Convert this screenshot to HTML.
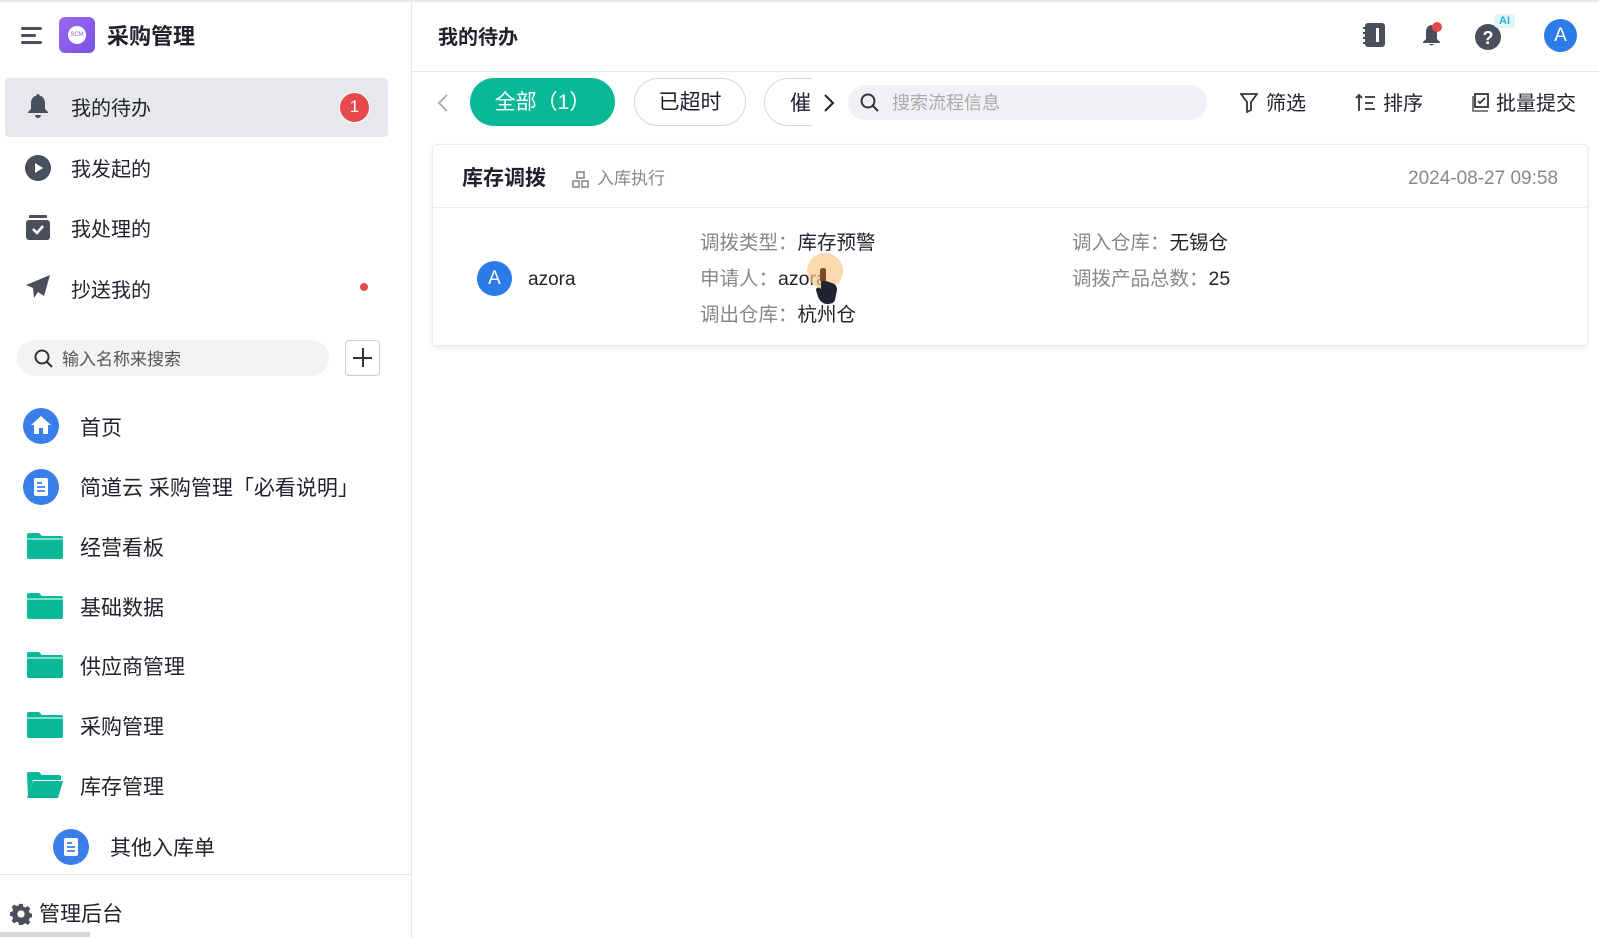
<!DOCTYPE html>
<html><head><meta charset="utf-8"><style>
*{box-sizing:border-box;margin:0;padding:0}
body{width:1599px;height:938px;overflow:hidden;background:#fff;font-family:"Liberation Sans","Noto Sans CJK SC",sans-serif;color:#1f2329;position:relative}
.a{position:absolute}
.t{position:absolute;white-space:nowrap;line-height:1}
.sb{position:absolute;left:0;top:0;width:412px;height:938px;border-right:1px solid #e5e6eb;border-top:2px solid #e8e9ec}
.topline{position:absolute;left:412px;top:0;right:0;height:2px;background:#e8e9ec}
.fold{width:36px;height:26px}
</style></head><body>
<div class="sb"></div>
<div class="topline"></div>
<div class="a" style="left:21px;top:27px;width:21px;height:3px;background:#4a4f5c;border-radius:2px"></div>
<div class="a" style="left:21px;top:34px;width:15px;height:3px;background:#4a4f5c;border-radius:2px"></div>
<div class="a" style="left:21px;top:41px;width:21px;height:3px;background:#4a4f5c;border-radius:2px"></div>
<div class="a" style="left:59px;top:17px;width:36px;height:36px;border-radius:6px;background:linear-gradient(135deg,#9a6cf0,#7a4fe6)"></div>
<div class="a" style="left:68px;top:26px;width:18px;height:18px;border-radius:50%;background:#fff;color:#8a5ce8;font-size:6px;text-align:center;line-height:18px">SCM</div>
<div class="t" style="left:107px;top:26px;font-size:22px;font-weight:bold">采购管理</div>

<div class="a" style="left:5px;top:78px;width:383px;height:59px;background:#e6e8ed;border-radius:4px"></div>
<svg class="a" style="left:26px;top:93px" width="24" height="26" viewBox="0 0 24 26"><path d="M12 1c-1 0-1.5.7-1.5 1.5C6.5 3.5 5 7 5 10v6l-3 3v1h20v-1l-3-3v-6c0-3-1.5-6.5-5.5-7.5C13.5 1.7 13 1 12 1zM9 22a3 3 0 0 0 6 0z" fill="#4a4f5c"/></svg>
<div class="t" style="left:71px;top:99px;font-size:20px">我的待办</div>
<div class="a" style="left:339px;top:92px;width:31px;height:31px;border-radius:50%;background:#e5484d;border:1.5px solid #fff;color:#fff;font-size:17px;text-align:center;line-height:28px">1</div>
<svg class="a" style="left:25px;top:155px" width="26" height="26"><circle cx="13" cy="13" r="13" fill="#4a4f5c"/><path d="M10 8l8 5-8 5z" fill="#fff"/></svg>
<div class="t" style="left:71px;top:160px;font-size:20px">我发起的</div>
<svg class="a" style="left:26px;top:215px" width="24" height="25"><rect x="3" y="0" width="18" height="3" rx="1" fill="#4a4f5c"/><rect x="0" y="5" width="24" height="20" rx="3" fill="#4a4f5c"/><path d="M7 14l4 4 6-7" stroke="#fff" stroke-width="2.5" fill="none"/></svg>
<div class="t" style="left:71px;top:220px;font-size:20px">我处理的</div>
<svg class="a" style="left:26px;top:275px" width="24" height="24"><path d="M24 0L0 10l7 3 1 10 4-6 6 4z" fill="#4a4f5c"/></svg>
<div class="t" style="left:71px;top:281px;font-size:20px">抄送我的</div>
<div class="a" style="left:360px;top:283px;width:8px;height:8px;border-radius:50%;background:#e5484d"></div>

<div class="a" style="left:17px;top:340px;width:312px;height:36px;border-radius:18px;background:#f2f3f5"></div>
<svg class="a" style="left:34px;top:349px" width="20" height="20"><circle cx="8" cy="8" r="6.5" stroke="#333" stroke-width="2" fill="none"/><path d="M13 13l5 5" stroke="#333" stroke-width="2"/></svg>
<div class="t" style="left:62px;top:351px;font-size:17px;color:#555">输入名称来搜索</div>
<div class="a" style="left:345px;top:340px;width:35px;height:36px;border:1px solid #ccc;border-radius:4px"></div>
<div class="a" style="left:353px;top:357px;width:19px;height:2px;background:#333"></div>
<div class="a" style="left:362px;top:348px;width:2px;height:19px;background:#333"></div>

<svg class="a" style="left:23px;top:408px" width="36" height="36"><circle cx="18" cy="18" r="18" fill="#3a7ee8"/><path d="M18 8l-10 9h3v9h5v-6h4v6h5v-9h3z" fill="#fff"/></svg>
<div class="t" style="left:80px;top:418px;font-size:21px">首页</div>
<svg class="a" style="left:23px;top:469px" width="36" height="36"><circle cx="18" cy="18" r="18" fill="#3a7ee8"/><rect x="11" y="9" width="14" height="18" rx="2" fill="#fff"/><path d="M14 14h5M14 18h8M14 22h8" stroke="#3a7ee8" stroke-width="1.8"/></svg>
<div class="t" style="left:80px;top:478px;font-size:21px">简道云 采购管理「必看说明」</div>
<svg class="a fold" style="left:27px;top:533px" viewBox="0 0 36 26"><path d="M0 2a2 2 0 0 1 2-2h10l3 3h19a2 2 0 0 1 2 2v19a2 2 0 0 1-2 2H2a2 2 0 0 1-2-2z" fill="#09b896"/><path d="M0 6h36" stroke="#fff" stroke-width="1"/></svg>
<div class="t" style="left:80px;top:538px;font-size:21px">经营看板</div>
<svg class="a fold" style="left:27px;top:593px" viewBox="0 0 36 26"><path d="M0 2a2 2 0 0 1 2-2h10l3 3h19a2 2 0 0 1 2 2v19a2 2 0 0 1-2 2H2a2 2 0 0 1-2-2z" fill="#09b896"/><path d="M0 6h36" stroke="#fff" stroke-width="1"/></svg>
<div class="t" style="left:80px;top:598px;font-size:21px">基础数据</div>
<svg class="a fold" style="left:27px;top:652px" viewBox="0 0 36 26"><path d="M0 2a2 2 0 0 1 2-2h10l3 3h19a2 2 0 0 1 2 2v19a2 2 0 0 1-2 2H2a2 2 0 0 1-2-2z" fill="#09b896"/><path d="M0 6h36" stroke="#fff" stroke-width="1"/></svg>
<div class="t" style="left:80px;top:657px;font-size:21px">供应商管理</div>
<svg class="a fold" style="left:27px;top:712px" viewBox="0 0 36 26"><path d="M0 2a2 2 0 0 1 2-2h10l3 3h19a2 2 0 0 1 2 2v19a2 2 0 0 1-2 2H2a2 2 0 0 1-2-2z" fill="#09b896"/><path d="M0 6h36" stroke="#fff" stroke-width="1"/></svg>
<div class="t" style="left:80px;top:717px;font-size:21px">采购管理</div>
<svg class="a fold" style="left:27px;top:772px" viewBox="0 0 36 26"><path d="M0 2a2 2 0 0 1 2-2h10l3 3h17a2 2 0 0 1 2 2v3H6l-5 16z" fill="#09b896"/><path d="M6 9h30l-5 17H0z" fill="#09b896"/></svg>
<div class="t" style="left:80px;top:777px;font-size:21px">库存管理</div>
<svg class="a" style="left:53px;top:829px" width="36" height="36"><circle cx="18" cy="18" r="18" fill="#3a7ee8"/><rect x="11" y="9" width="14" height="18" rx="2" fill="#fff"/><path d="M14 14h5M14 18h8M14 22h8" stroke="#3a7ee8" stroke-width="1.8"/></svg>
<div class="t" style="left:110px;top:838px;font-size:21px">其他入库单</div>
<div class="a" style="left:0;top:874px;width:412px;height:1px;background:#e5e6eb"></div>
<svg class="a" style="left:10px;top:903px" width="22" height="22" viewBox="0 0 24 24"><path d="M10 1h4l.6 3 2.2 1 2.6-1.7 2.8 2.8L20.5 8.7l1 2.3 2.5.6v4l-2.5.6-1 2.2 1.7 2.6-2.8 2.8-2.6-1.7-2.2 1L14 24h-4l-.6-2.5-2.3-1-2.6 1.7-2.8-2.8 1.7-2.6-1-2.3L0 14v-4l2.5-.6 1-2.3L1.8 4.5l2.8-2.8 2.6 1.7 2.2-1z" fill="#4a4f5c"/><circle cx="12" cy="12" r="4" fill="#fff"/></svg>
<div class="t" style="left:39px;top:904px;font-size:21px">管理后台</div>
<div class="a" style="left:0;top:932px;width:90px;height:5px;background:#d6d7da"></div>

<div class="t" style="left:438px;top:28px;font-size:20px;font-weight:bold">我的待办</div>
<div class="a" style="left:412px;top:71px;right:0;height:1px;background:#e8e9ec"></div>
<svg class="a" style="left:1363px;top:23px" width="22" height="24"><rect x="2" y="0" width="20" height="24" rx="3" fill="#4a4f5c"/><rect x="13" y="5" width="3" height="14" fill="#fff"/><path d="M0 5h4M0 10h4M0 15h4M0 20h4" stroke="#4a4f5c" stroke-width="2"/></svg>
<svg class="a" style="left:1420px;top:22px" width="24" height="26"><path d="M11 3c-4 1-5 4-5 7v7l-3 3v1h17v-1l-3-3v-7c0-3-2-6-6-7zM9 22a3 3 0 0 0 5 0z" fill="#4a4f5c"/><circle cx="17" cy="5" r="5" fill="#e5484d"/></svg>
<svg class="a" style="left:1475px;top:22px" width="28" height="28"><circle cx="13" cy="15" r="13" fill="#4a4f5c"/><text x="13" y="22" font-size="18" font-weight="bold" fill="#fff" text-anchor="middle" font-family="Liberation Sans">?</text></svg>
<div class="a" style="left:1494px;top:14px;width:21px;height:14px;border-radius:4px;background:#dff4fb;color:#27b0d8;font-size:11px;font-weight:bold;text-align:center;line-height:14px">AI</div>
<div class="a" style="left:1544px;top:19px;width:33px;height:33px;border-radius:50%;background:#2b7be8;color:#fff;font-size:19px;text-align:center;line-height:33px">A</div>

<svg class="a" style="left:437px;top:93px" width="12" height="20"><path d="M10 2L2 10l8 8" stroke="#aaa" stroke-width="1.8" fill="none"/></svg>
<div class="a" style="left:470px;top:78px;width:145px;height:48px;border-radius:24px;background:#09b896;color:#fff;font-size:21px;text-align:center;line-height:50px">全部（1）</div>
<div class="a" style="left:634px;top:78px;width:112px;height:48px;border-radius:24px;border:1px solid #d6d7da;font-size:21px;text-align:center;line-height:48px">已超时</div>
<div class="a" style="left:764px;top:78px;width:48px;height:48px;border-radius:24px 0 0 24px;border:1px solid #d6d7da;border-right:none;overflow:hidden"><span class="t" style="left:25px;top:14px;font-size:21px">催</span></div>
<svg class="a" style="left:823px;top:93px" width="12" height="20"><path d="M2 2l8 8-8 8" stroke="#222" stroke-width="2" fill="none"/></svg>
<div class="a" style="left:848px;top:85px;width:359px;height:35px;border-radius:18px;background:#f0f1f4"></div>
<svg class="a" style="left:860px;top:93px" width="20" height="20"><circle cx="8" cy="8" r="6.5" stroke="#333" stroke-width="2" fill="none"/><path d="M13 13l5 5" stroke="#333" stroke-width="2"/></svg>
<div class="t" style="left:892px;top:94px;font-size:18px;color:#aaa">搜索流程信息</div>
<svg class="a" style="left:1240px;top:93px" width="18" height="20"><path d="M1 1h16l-6 8v8l-4 2v-10z" stroke="#333" stroke-width="1.8" fill="none"/></svg>
<div class="t" style="left:1266px;top:94px;font-size:20px">筛选</div>
<svg class="a" style="left:1355px;top:93px" width="22" height="20"><path d="M4 18V2M1 5l3-3 3 3M10 4h10M10 10h8M10 16h10" stroke="#333" stroke-width="1.8" fill="none"/></svg>
<div class="t" style="left:1383px;top:94px;font-size:20px">排序</div>
<svg class="a" style="left:1470px;top:93px" width="20" height="20"><path d="M3 3v15h15" stroke="#555" stroke-width="1.5" fill="none"/><rect x="5" y="1" width="13" height="13" stroke="#333" stroke-width="1.8" fill="none"/><path d="M8 8l2 2 5-5" stroke="#333" stroke-width="1.8" fill="none"/></svg>
<div class="t" style="left:1496px;top:94px;font-size:20px">批量提交</div>

<div class="a" style="left:432px;top:144px;width:1156px;height:202px;border:1px solid #ebecef;border-radius:4px;box-shadow:0 2px 6px rgba(0,0,0,.08)"></div>
<div class="a" style="left:433px;top:207px;width:1154px;height:1px;background:#ebecef"></div>
<div class="t" style="left:462px;top:168px;font-size:21px;font-weight:bold">库存调拨</div>
<svg class="a" style="left:572px;top:171px" width="17" height="17"><rect x="5" y="1" width="7" height="6" stroke="#888" stroke-width="1.6" fill="none"/><rect x="1" y="10" width="6" height="6" stroke="#888" stroke-width="1.6" fill="none"/><rect x="10" y="10" width="6" height="6" stroke="#888" stroke-width="1.6" fill="none"/></svg>
<div class="t" style="left:597px;top:170px;font-size:17px;color:#888">入库执行</div>
<div class="t" style="left:1408px;top:169px;font-size:19px;color:#888">2024-08-27 09:58</div>

<div class="a" style="left:477px;top:261px;width:35px;height:35px;border-radius:50%;background:#2b7be8;color:#fff;font-size:19px;text-align:center;line-height:35px">A</div>
<div class="t" style="left:528px;top:270px;font-size:19px">azora</div>
<div class="t" style="left:700px;top:234px;font-size:19.5px"><span style="color:#888">调拨类型：</span>库存预警</div>
<div class="t" style="left:700px;top:270px;font-size:19.5px"><span style="color:#888">申请人：</span>azora</div>
<div class="t" style="left:700px;top:306px;font-size:19.5px"><span style="color:#888">调出仓库：</span>杭州仓</div>
<div class="t" style="left:1072px;top:234px;font-size:19.5px"><span style="color:#888">调入仓库：</span>无锡仓</div>
<div class="t" style="left:1072px;top:270px;font-size:19.5px"><span style="color:#888">调拨产品总数：</span>25</div>
<div class="a" style="left:807px;top:253px;width:36px;height:36px;border-radius:50%;background:rgba(250,200,140,.7)"></div>
<svg class="a" style="left:815px;top:266px" width="24" height="38"><path d="M8 2c2 0 3 1 3 3v10l6 2c3 1 5 3 5 7l-2 10c-1 3-4 4-8 4-4 0-7-3-9-7l-2-7c0-2 2-3 4-2l1 1V5c0-2 1-3 2-3z" fill="#1f2430"/><path d="M8 2c2 0 3 1 3 3v10H5V5c0-2 1-3 3-3z" fill="#7a4a2a"/></svg>
</body></html>
